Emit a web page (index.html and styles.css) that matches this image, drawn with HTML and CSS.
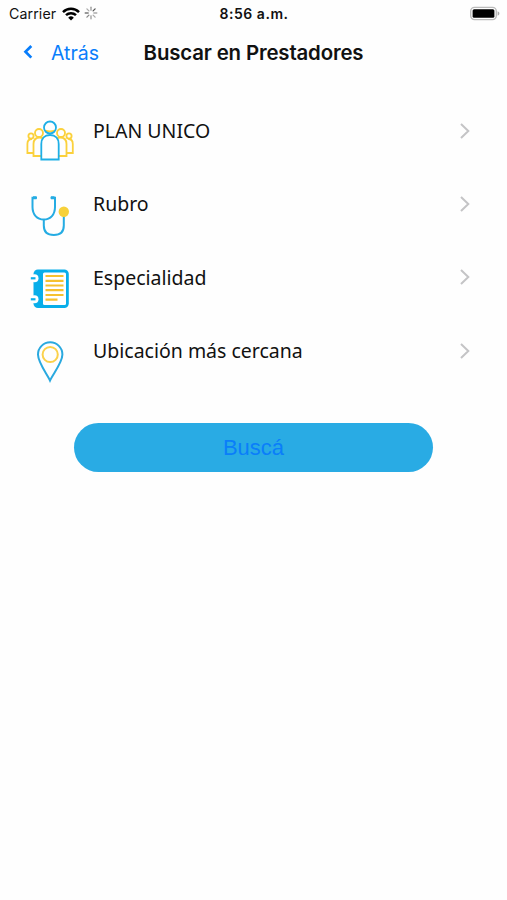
FILE: index.html
```html
<!DOCTYPE html>
<html lang="es">
<head>
    <meta charset="UTF-8">
    <meta name="viewport" content="width=device-width, initial-scale=1.0">
    <title>Buscar en Prestadores</title>
    <link rel="stylesheet" href="styles.css">
</head>
<body>
    <div class="status-bar">
        <div class="status-left">
            <span class="carrier">Carrier</span>
            <svg class="wifi" width="18" height="14" viewBox="0 0 18 14" fill="none" stroke="#000" stroke-width="2.5">
                <path d="M1 5.1a11.4 11.4 0 0 1 16 0"/>
                <path d="M4 8.2a7.2 7.2 0 0 1 10 0"/>
                <path d="M9 13.6L6.2 10.7a4 4 0 0 1 5.6 0z" fill="#000" stroke="none"/>
            </svg>
            <svg class="spinner" width="14" height="14" viewBox="0 0 14 14" stroke-width="1.3" stroke-linecap="round">
                <path d="M7 1.2v3" stroke="#999"/>
                <path d="M11.1 2.9L9.1 4.9" stroke="#555"/>
                <path d="M12.8 7h-3" stroke="#aaa"/>
                <path d="M11.1 11.1L9.1 9.1" stroke="#aaa"/>
                <path d="M7 12.8v-3" stroke="#999"/>
                <path d="M2.9 11.1L4.9 9.1" stroke="#888"/>
                <path d="M1.2 7h3" stroke="#777"/>
                <path d="M2.9 2.9L4.9 4.9" stroke="#aaa"/>
            </svg>
        </div>
        <span class="clock">8:56 a.m.</span>
        <svg class="battery" width="32" height="16" viewBox="0 0 32 16">
            <rect x="1.7" y="1.4" width="25.6" height="12.2" rx="3.8" fill="#fff" stroke="#bbb" stroke-width="1.4"/>
            <rect x="3.6" y="3.3" width="21.8" height="8.4" rx="1.5" fill="#000"/>
            <path d="M28.6 5.3c2.4.8 2.4 3.6 0 4.4z" fill="#aaa"/>
        </svg>
    </div>

    <div class="nav-bar">
        <a class="back" href="#">
            <svg width="12" height="16" viewBox="0 0 12 16" fill="none" stroke="#087dfb" stroke-width="2.7">
                <path d="M10.300 1L4.500 6.800l5.800 5.800"/>
            </svg>
            <span>Atrás</span>
        </a>
        <h1>Buscar en Prestadores</h1>
    </div>

    <ul class="filters">
        <li class="filter">
            <svg class="filter-icon" viewBox="0 0 70 60" fill="none" stroke-width="1.8">
                <g stroke="#fbd13c">
                    <circle cx="16" cy="26" r="2.6"/>
                    <path d="M18 43h-5.6V34c0-3 1.6-5 4.6-5"/>
                    <circle cx="24" cy="23" r="4"/>
                    <path d="M26 46h-7.5V34c0-4 2.5-6.5 6.5-6.5 1 0 2 .3 2.5.7"/>
                    <circle cx="54" cy="26" r="2.6"/>
                    <path d="M52 43h5.8V34c0-3-1.6-5-4.6-5"/>
                    <circle cx="46" cy="23" r="4"/>
                    <path d="M44 46h7.5V34c0-4-2.500-6.500-6.500-6.500-1 0-2 .3-2.500.7"/>
                    <path d="M30.500 20.500c3 1.200 6 1.200 9 0"/>
                </g>
                <g stroke="#1eafe6">
                    <circle cx="35" cy="17.500" r="6"/>
                    <path d="M26.300 49.500V34c0-5.500 3.300-9 8.700-9s8.700 3.500 8.700 9v15.500z" fill="#fff"/>
                </g>
            </svg>
            <span class="filter-name">PLAN UNICO</span>
            <svg class="chevron" viewBox="0 0 12 18"><path d="M2 2l7.300 7L2 16"/></svg>
        </li>
        <li class="filter">
            <svg class="filter-icon" viewBox="0 0 70 60" fill="none" stroke="#25ace3" stroke-width="2">
                <path d="M22 13.700h-4.500V23c0 7.500 4.500 12.500 11.300 12.500S40 30.500 40 23v-9.300h-4.500"/>
                <path d="M18 13.700h3.500M36 13.700h3.500" stroke-width="3"/>
                <path d="M28.800 35.500V41.500c0 6.500 4 9.500 10 9.500s10-3 10-9.500V32"/>
                <circle cx="48.800" cy="27.700" r="5.200" fill="#f7d13b" stroke="none"/>
            </svg>
            <span class="filter-name">Rubro</span>
            <svg class="chevron" viewBox="0 0 12 18"><path d="M2 2l7.300 7L2 16"/></svg>
        </li>
        <li class="filter">
            <svg class="filter-icon" viewBox="0 0 70 60" fill="none">
                <rect x="18.500" y="12.500" width="35.300" height="38.500" rx="4.500" fill="#08aeea"/>
                <rect x="28" y="15.500" width="23" height="32.500" rx="1.500" fill="#fff"/>
                <g fill="#fff">
                    <circle cx="19.500" cy="21.300" r="4"/>
                    <circle cx="19.500" cy="42.300" r="4"/>
                </g>
                <g stroke="#08aeea" stroke-width="2.200">
                    <path d="M15.800 21.300h4.700"/>
                    <path d="M15.800 42.300h4.700"/>
                </g>
                <path d="M30.500 19h18M30.500 23.800h18M30.500 28.500h18M30.500 33.200h18M30.500 38h18M30.500 42.700h12" stroke="#f6c12f" stroke-width="2.200"/>
            </svg>
            <span class="filter-name">Especialidad</span>
            <svg class="chevron" viewBox="0 0 12 18"><path d="M2 2l7.300 7L2 16"/></svg>
        </li>
        <li class="filter">
            <svg class="filter-icon" viewBox="0 0 70 60" fill="none" stroke-width="2">
                <path d="M35 50.500C32 44 23 32.500 23 24.500a12.200 12.200 0 0 1 24.400 0C47.400 32.500 38 44 35 50.500z" stroke="#2aa9df"/>
                <circle cx="35.200" cy="24.500" r="7.600" stroke="#fbd14b"/>
            </svg>
            <span class="filter-name">Ubicación más cercana</span>
            <svg class="chevron" viewBox="0 0 12 18"><path d="M2 2l7.300 7L2 16"/></svg>
        </li>
    </ul>

    <button class="search">Buscá</button>
</body>
</html>
```
FILE: styles.css
```css
* {
    margin: 0;
    padding: 0;
    box-sizing: border-box;
}

body {
    font-family: Inter, 'Liberation Sans', sans-serif;
    background: #fefefe;
    color: #111;
    min-height: 100vh;
}

.status-bar {
    display: grid;
    grid-template-columns: 1fr auto 1fr;
    align-items: center;
    height: 27px;
    padding: 0 6px 0 7px;
}

.status-left {
    display: flex;
    align-items: center;
    padding-left: 2px;
}

.carrier {
    font-size: 14.2px;
    letter-spacing: 0.1px;
    width: 53px;
}

.spinner {
    margin-left: 4px;
    margin-top: -1px;
}

.clock {
    font-size: 14px;
    font-weight: 600;
    letter-spacing: 0.55px;
}

.battery {
    justify-self: end;
}

.nav-bar {
    display: grid;
    grid-template-columns: 1fr auto 1fr;
    align-items: center;
    height: 51px;
    padding: 0 21px;
}

.back {
    display: flex;
    align-items: center;
    gap: 18px;
    font-size: 19.5px;
    color: #087dfb;
    text-decoration: none;
}

h1 {
    font-size: 20.4px;
    font-weight: 600;
    letter-spacing: -0.15px;
    white-space: nowrap;
}

.filters {
    list-style: none;
    margin-top: 16px;
}

.filter {
    display: flex;
    align-items: center;
    height: 73.33px;
    padding: 0 36px 0 15px;
}

.filter-icon {
    width: 70px;
    height: 60px;
    margin-top: 19px;
}

.filter-name {
    flex: 1;
    margin-left: 8px;
    font-family: 'Noto Sans', sans-serif;
    font-size: 19.5px;
}

.chevron {
    width: 12px;
    height: 18px;
    fill: none;
    stroke: #c4c4c6;
    stroke-width: 2;
}

.search {
    display: block;
    width: 359px;
    height: 49px;
    margin: 36px auto 0;
    padding-top: 1px;
    border: none;
    border-radius: 25px;
    background: #29abe4;
    color: #0a7efa;
    font-family: 'Liberation Sans', sans-serif;
    font-size: 22px;
}
```
